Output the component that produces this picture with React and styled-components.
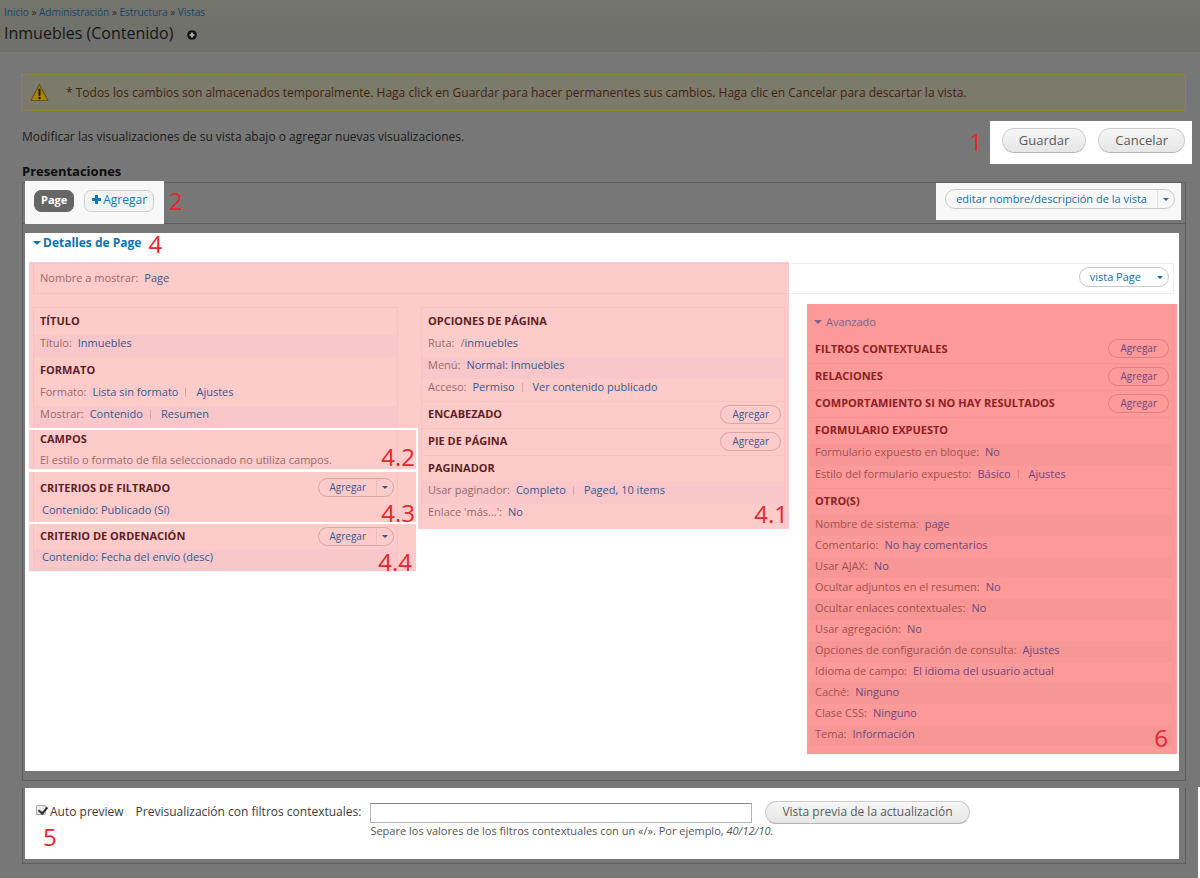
import React, { useState } from "react";
import styled, { createGlobalStyle, css } from "styled-components";

const GlobalStyle = createGlobalStyle`
  * {
    box-sizing: border-box;
  }

  body {
    margin: 0;
    background-color: #777777;
    color: #1c1c1c;
    font-family: "Open Sans", "Noto Sans", sans-serif;
    font-size: 12px;
    line-height: 16px;
  }

  a {
    text-decoration: none;
  }

  button, input {
    font-family: inherit;
  }
`;

// * Each marked area has its own set of colors.
const tones = {
  pink: { background: "#fecbcb", stripe: "#f9c7c9", line: "#f6c3c4", label: "#99696b", link: "#35588f", heading: "#5d1f22", pill: "#d9a5a8" },
  red: { background: "#fb9a98", stripe: "#f69795", line: "#f39492", label: "#a54f50", link: "#70477f", heading: "#8d2023", pill: "#de7f80" }
};

const Page = styled.div`
  position: relative;
  min-height: 100vh;
  padding-bottom: 14px;
`;

const EdgeStrip = styled.div`
  position: absolute;
  right: 0;
  bottom: 0;
  width: 2px;
  height: 91px;
  background-color: #ffffff;
`;

const Header = styled.header`
  height: 52px;
  padding: 5px 4px 0;
  background: linear-gradient(#73746c, #6f6f6c);
`;

const Breadcrumb = styled.nav`
  color: #2b2b2b;
  font-size: 10px;
  line-height: 14px;

  a {
    color: #12476a;
  }
`;

const PageTitle = styled.h1`
  display: flex;
  align-items: center;
  gap: 14px;
  margin: 3px 0 0;
  color: #161616;
  font-size: 16px;
  font-weight: 400;
  line-height: 22px;

  svg {
    margin-top: 4px;
  }
`;

const Warning = styled.div`
  display: flex;
  align-items: center;
  gap: 17px;
  height: 37px;
  margin: 22px 14px 0 21px;
  padding: 0 8px;
  border: 1px solid #8c8638;
  background-color: #7b7a6b;
  color: #451f10;
`;

const IntroRow = styled.div`
  display: flex;
  justify-content: space-between;
  margin: 10px 8px 0 22px;
`;

const IntroText = styled.p`
  margin: 8px 0 0;
`;

const Actions = styled.div`
  position: relative;
  display: flex;
  align-items: center;
  gap: 12px;
  height: 43px;
  padding: 0 7px 5px 12px;
  background-color: #ffffff;
`;

const RoundButton = styled.button`
  height: ${props => props.$height || 25}px;
  padding: 0 16px 1px;
  border: 1px solid #cccccc;
  border-bottom-color: #b4b4b4;
  border-radius: 13px;
  background: linear-gradient(#f6f6f6, #e6e6e6);
  color: #5a5a5a;
  font-size: ${props => props.$fontSize || 13}px;
  line-height: 18px;
`;

const SectionTitle = styled.h2`
  margin: -1px 22px 0;
  color: #0d0d0d;
  font-size: 13px;
  font-weight: 700;
  line-height: 16px;
`;

const Frame = styled.section`
  margin: ${props => props.$joined ? 0 : 3}px 14px 0 22px;
  border: 1px solid #5e5e5e;
  border-top-width: ${props => props.$joined ? 0 : 1}px;
`;

const FrameBar = styled.div`
  display: flex;
  align-items: flex-start;
  justify-content: space-between;
  height: 41px;
  padding: 0 4px 0 2px;
  border-bottom: 1px solid #5e5e5e;
`;

const Tabs = styled.div`
  position: relative;
  display: flex;
  gap: 10px;
  height: 43px;
  margin-top: -2px;
  padding: 9px 10px 0 9px;
  background-color: #f8f8f8;
`;

const Tab = styled.button`
  display: flex;
  align-items: center;
  gap: 1px;
  height: 22px;
  padding: 0 6px 3px;
  border: 1px solid ${props => props.$active ? "#666666" : "#cfcfcf"};
  border-radius: 7px;
  background-color: ${props => props.$active ? "#666666" : "#f3f3f3"};
  color: ${props => props.$active ? "#ffffff" : "#0f7ab8"};
  font-size: ${props => props.$active ? 11 : 12}px;
  font-weight: ${props => props.$active ? 700 : 400};
`;

const EditBox = styled.div`
  height: 37px;
  padding: 6px 6px 0 9px;
  background-color: #f8f8f8;
`;

const SplitButton = styled.div`
  display: flex;
  height: ${props => props.$height || 19}px;
  border: 1px solid ${props => props.$line || "#c9c9c9"};
  border-radius: 10px;
`;

const SplitPart = styled.button`
  display: flex;
  align-items: center;
  padding: 0 10px 1px;
  border: 0;
  background: none;
  color: ${props => props.$color || "#0f6fa8"};
  font-size: ${props => props.$fontSize || 11}px;
`;

const SplitToggle = styled.button`
  display: flex;
  align-items: center;
  width: 17px;
  padding: 0 5px;
  border: 0;
  border-left: 1px solid ${props => props.$line || "transparent"};
  background: none;
  color: ${props => props.$color || "#0f6fa8"};
`;

const Marker = styled.span`
  position: absolute;
  color: #e5262e;
  font-size: 24px;
  font-weight: 400;
  line-height: 24px;

  ${props => props.$place === "left" && css`
    right: calc(100% + 7px);
    top: 9px;
  `}
  ${props => props.$place === "right" && css`
    left: calc(100% + 5px);
    top: 8px;
  `}
  ${props => props.$place === "title" && css`
    left: calc(100% + 7px);
    top: -1px;
  `}
  ${props => props.$place === "corner" && css`
    right: ${props.$right || 1}px;
    bottom: ${props.$bottom || 0}px;
  `}
  ${props => props.$place === "inset" && css`
    right: 9px;
    bottom: 4px;
  `}
  ${props => props.$place === "below" && css`
    left: 18px;
    top: 37px;
  `}
`;

const Details = styled.div`
  margin: 9px 6px 9px 2px;
  padding: 0 2px 17px 4px;
  background-color: #ffffff;
`;

const DetailsTitle = styled.h3`
  position: relative;
  display: inline-flex;
  align-items: center;
  gap: 2px;
  height: 20px;
  margin: 0 0 9px 4px;
  color: #0a74b4;
  font-size: 12px;
  line-height: 20px;
  vertical-align: top;
`;

const DetailsGrid = styled.div`
  display: grid;
  grid-template-columns: 760fr 388fr;
  align-items: start;
`;

const Summary = styled.div`
  height: 43px;
  padding: 1px 0 11px 4px;
  background-color: ${tones.pink.background};
`;

const SummaryLine = styled.div`
  height: 31px;
  padding-top: 6px;
  border: solid ${tones.pink.line};
  border-width: 1px 0 1px 1px;
`;

const ViewBar = styled.div`
  display: flex;
  justify-content: flex-end;
  height: 31px;
  margin: 1px 3px 10px 0;
  padding: 3px 4px 0 0;
  border: solid #efefef;
  border-width: 1px 1px 1px 0;
`;

const Buckets = styled.div`
  display: grid;
  grid-template-columns: 389fr 371fr;
  align-items: start;
`;

const BucketBlock = styled.div`
  padding: 2px 20px 0 4px;
  background-color: ${tones.pink.background};
`;

const MarkedBlock = styled.div`
  position: relative;
  margin: ${props => props.$gap || 2}px 2px 0 0;
  padding: 0 18px 0 4px;
  background-color: ${tones.pink.background};
`;

const PageBlock = styled.div`
  position: relative;
  padding: 2px 4px 3px 3px;
  background-color: ${tones.pink.background};
`;

const Advanced = styled.div`
  position: relative;
  margin-left: 18px;
  padding: 5px 5px 8px 2px;
  background-color: ${tones.red.background};
`;

const AdvancedToggle = styled.button`
  display: flex;
  align-items: center;
  gap: 4px;
  height: 27px;
  padding: 0 5px 2px;
  border: 0;
  background: none;
  color: #84608f;
  font-size: 11px;
`;

const Box = styled.div`
  padding: ${props => props.$top || 0}px 0 ${props => props.$bottom || 0}px;
  border: solid ${tones.pink.line};
  border-width: ${props => props.$first ? "1px 1px 0" : "0 1px"};
`;

const GroupHead = styled.div`
  display: flex;
  align-items: center;
  justify-content: space-between;
  height: ${props => props.$marked ? 22 : 27}px;
  padding: 0 3px ${props => props.$marked ? 4 : 2}px 6px;
  border-top: ${props => props.$line ? `1px solid ${props.$tone.line}` : "0"};

  h4 {
    margin: 0;
    color: ${props => props.$tone.heading};
    font-size: 11px;
    font-weight: 700;
    line-height: 18px;
  }
`;

const AddButton = styled.button`
  height: 19px;
  padding: 0 11px 1px;
  border: 1px solid ${props => props.$tone.pill};
  border-radius: 10px;
  background: none;
  color: ${props => props.$tone.link};
  font-size: 10px;
  line-height: 16px;
`;

const rowSizes = {
  regular: css`
    height: 22px;
    padding-bottom: 6px;
  `,
  short: css`
    height: 21px;
    padding-bottom: 4px;
  `,
  tight: css`
    height: 17px;
    padding-bottom: 1px;
  `
};

const SettingRow = styled.div`
  display: flex;
  align-items: center;
  ${props => rowSizes[props.$size || "regular"]}
  padding-left: ${props => props.$indent ? 8 : 6}px;
  background-color: ${props => props.$striped ? props.$tone.stripe : "transparent"};
  color: ${props => props.$tone.label};
  font-size: 11px;
  line-height: 16px;
  white-space: nowrap;

  a {
    color: ${props => props.$tone.link};
  }
`;

const SettingLabel = styled.span`
  margin-right: 6px;
`;

const Separator = styled.span`
  width: 1px;
  height: 9px;
  margin: 0 10px 0 7px;
  background-color: ${props => props.$tone.pill};
`;

const Preview = styled.form`
  position: relative;
  display: flex;
  align-items: flex-start;
  height: 71px;
  margin: 7px 6px 4px 2px;
  padding: 13px 11px 0;
  background-color: #ffffff;
  color: #3b3b3b;
`;

const PreviewCheck = styled.label`
  display: flex;
  align-items: center;
  gap: 4px;
  height: 22px;
  margin-right: 12px;
`;

const Checkbox = styled.input`
  position: relative;
  width: 10px;
  height: 10px;
  margin: 0 0 4px;
  border: 1px solid #a9a9a9;
  border-radius: 1px;
  background-color: #ececec;
  appearance: none;

  &:checked::after {
    content: "";
    position: absolute;
    left: 3px;
    top: -1px;
    width: 4px;
    height: 7px;
    border: solid #2e2e2e;
    border-width: 0 2px 2px 0;
    transform: rotate(40deg);
  }
`;

const PreviewLabel = styled.label`
  height: 22px;
  margin-right: 9px;
  line-height: 22px;
`;

const PreviewField = styled.div`
  display: flex;
  flex: 0 1 382px;
  flex-direction: column;
  min-width: 0;
  padding-top: 2px;

  input {
    width: 100%;
    height: 20px;
    border: 1px solid #b5b5b5;
    border-top-color: #888888;
    background-color: #ffffff;
  }
`;

const PreviewHelp = styled.p`
  margin: 0;
  color: #555555;
  font-size: 11px;
  line-height: 16px;
  white-space: nowrap;
`;

const PreviewSubmit = styled.div`
  margin-left: 13px;
`;

const Caret = ({ size = 6 }) => (
  <svg width={size} height={size / 2} viewBox="0 0 8 4" fill="currentColor" aria-hidden="true">
    <path d="M0 0h8L4 4z" />
  </svg>
);

const Setting = ({ label, prefix, links, tone, striped, size }) => (
  <SettingRow $tone={tone} $striped={striped} $size={size} $indent={!label}>
    {label ? <SettingLabel>{label}</SettingLabel> : null}
    {prefix}
    {links.map((link, index) => (
      <React.Fragment key={link}>
        {index > 0 ? <Separator $tone={tone} /> : null}
        <a href="#">{link}</a>
      </React.Fragment>
    ))}
  </SettingRow>
);

const AddSplit = () => (
  <SplitButton $line={tones.pink.pill}>
    <SplitPart type="button" $fontSize={10} $color={tones.pink.link}>Agregar</SplitPart>
    <SplitToggle type="button" aria-label="Más opciones" $line="#edbcbe" $color={tones.pink.link}><Caret /></SplitToggle>
  </SplitButton>
);

const Add = ({ tone }) => <AddButton type="button" $tone={tone}>Agregar</AddButton>;

const Group = ({ title, tone, line, marked, action, children }) => (
  <>
    <GroupHead $tone={tone} $line={line} $marked={marked}>
      <h4>{title}</h4>
      {action}
    </GroupHead>
    {children}
  </>
);

const otherSettings = [
  { label: "Nombre de sistema:", links: ["page"] },
  { label: "Comentario:", links: ["No hay comentarios"] },
  { label: "Usar AJAX:", links: ["No"] },
  { label: "Ocultar adjuntos en el resumen:", links: ["No"] },
  { label: "Ocultar enlaces contextuales:", links: ["No"] },
  { label: "Usar agregación:", links: ["No"] },
  { label: "Opciones de configuración de consulta:", links: ["Ajustes"] },
  { label: "Idioma de campo:", links: ["El idioma del usuario actual"] },
  { label: "Caché:", links: ["Ninguno"] },
  { label: "Clase CSS:", links: ["Ninguno"] },
  { label: "Tema:", links: ["Información"] }
];

const App = () => {

  const [autoPreview, setAutoPreview] = useState(true);
  const [txtFilters, setTxtFilters] = useState("");

  const { pink, red } = tones;

  return (
    <Page>
      <GlobalStyle />

      <Header>
        <Breadcrumb>
          <a href="#">Inicio</a> » <a href="#">Administración</a> » <a href="#">Estructura</a> » <a href="#">Vistas</a>
        </Breadcrumb>
        <PageTitle>
          Inmuebles (Contenido)
          <svg width="10" height="10" viewBox="0 0 10 10" aria-hidden="true">
            <circle cx="5" cy="5" r="4.8" fill="#111111" />
            <path d="M5 2.600v4.800M2.600 5h4.800" stroke="#a4a4a0" strokeWidth="2.200" />
          </svg>
        </PageTitle>
      </Header>

      <Warning>
        <svg width="19" height="19" viewBox="0 0 19 19" aria-hidden="true">
          <path d="M9.500 1.500L18 17.500H1z" fill="#a88312" stroke="#6b5310" strokeWidth="1.200" strokeLinejoin="round" />
          <path d="M9.500 6.500v5.500" stroke="#1c1606" strokeWidth="2" strokeLinecap="round" />
          <circle cx="9.500" cy="15" r="1.200" fill="#1c1606" />
        </svg>
        <span>* Todos los cambios son almacenados temporalmente. Haga click en Guardar para hacer permanentes sus cambios. Haga clic en Cancelar para descartar la vista.</span>
      </Warning>

      <IntroRow>
        <IntroText>Modificar las visualizaciones de su vista abajo o agregar nuevas visualizaciones.</IntroText>
        <Actions>
          <Marker $place="left">1</Marker>
          <RoundButton type="button">Guardar</RoundButton>
          <RoundButton type="button">Cancelar</RoundButton>
        </Actions>
      </IntroRow>

      <SectionTitle>Presentaciones</SectionTitle>

      <Frame>
        <FrameBar>
          <Tabs>
            <Tab type="button" $active>Page</Tab>
            <Tab type="button">
              <svg width="11" height="11" viewBox="0 0 11 11" aria-hidden="true">
                <path d="M5.500 1v9M1 5.500h9" stroke="#0f7ab8" strokeWidth="3" />
              </svg>
              Agregar
            </Tab>
            <Marker $place="right">2</Marker>
          </Tabs>
          <EditBox>
            <SplitButton $height={20}>
              <SplitPart type="button">editar nombre/descripción de la vista</SplitPart>
              <SplitToggle type="button" aria-label="Más opciones" $line="#dddddd"><Caret /></SplitToggle>
            </SplitButton>
          </EditBox>
        </FrameBar>

        <Details>
          <DetailsTitle>
            <Caret size={8} />
            Detalles de Page
            <Marker $place="title">4</Marker>
          </DetailsTitle>

          <DetailsGrid>
            <div>
              <Summary>
                <SummaryLine>
                  <Setting tone={pink} label="Nombre a mostrar:" links={["Page"]} />
                </SummaryLine>
              </Summary>

              <Buckets>
                <div>
                  <BucketBlock>
                    <Box $first>
                      <Group title="TÍTULO" tone={pink}>
                        <Setting tone={pink} striped label="Título:" links={["Inmuebles"]} />
                      </Group>
                      <Group title="FORMATO" tone={pink}>
                        <Setting tone={pink} label="Formato:" links={["Lista sin formato", "Ajustes"]} />
                        <Setting tone={pink} striped label="Mostrar:" links={["Contenido", "Resumen"]} />
                      </Group>
                    </Box>
                  </BucketBlock>

                  <MarkedBlock>
                    <Box>
                      <Group title="CAMPOS" tone={pink} marked>
                        <SettingRow $tone={pink} $size="tight">El estilo o formato de fila seleccionado no utiliza campos.</SettingRow>
                      </Group>
                    </Box>
                    <Marker $place="corner">4.2</Marker>
                  </MarkedBlock>

                  <MarkedBlock $gap={3}>
                    <Box $top={3} $bottom={3}>
                      <Group title="CRITERIOS DE FILTRADO" tone={pink} action={<AddSplit />}>
                        <Setting tone={pink} size="tight" links={["Contenido: Publicado (Sí)"]} />
                      </Group>
                    </Box>
                    <Marker $place="corner" $bottom={-3}>4.3</Marker>
                  </MarkedBlock>

                  <MarkedBlock>
                    <Box $top={3}>
                      <Group title="CRITERIO DE ORDENACIÓN" tone={pink} marked action={<AddSplit />}>
                        <Setting tone={pink} striped links={["Contenido: Fecha del envío (desc)"]} />
                      </Group>
                    </Box>
                    <Marker $place="corner" $right={4} $bottom={-3}>4.4</Marker>
                  </MarkedBlock>
                </div>

                <PageBlock>
                  <Box $first>
                    <Group title="OPCIONES DE PÁGINA" tone={pink}>
                      <Setting tone={pink} label="Ruta:" prefix="/" links={["inmuebles"]} />
                      <Setting tone={pink} striped label="Menú:" links={["Normal: Inmuebles"]} />
                      <Setting tone={pink} label="Acceso:" links={["Permiso", "Ver contenido publicado"]} />
                    </Group>
                    <Group title="ENCABEZADO" tone={pink} line action={<Add tone={pink} />} />
                    <Group title="PIE DE PÁGINA" tone={pink} line action={<Add tone={pink} />} />
                    <Group title="PAGINADOR" tone={pink} line>
                      <Setting tone={pink} striped label="Usar paginador:" links={["Completo", "Paged, 10 items"]} />
                      <Setting tone={pink} label="Enlace 'más...':" links={["No"]} />
                    </Group>
                  </Box>
                  <Marker $place="corner" $bottom={3}>4.1</Marker>
                </PageBlock>
              </Buckets>
            </div>

            <div>
              <ViewBar>
                <SplitButton $height={20}>
                  <SplitPart type="button">vista Page</SplitPart>
                  <SplitToggle type="button" aria-label="Más opciones"><Caret /></SplitToggle>
                </SplitButton>
              </ViewBar>

              <Advanced>
                <AdvancedToggle type="button"><Caret size={8} />Avanzado</AdvancedToggle>
                <Group title="FILTROS CONTEXTUALES" tone={red} action={<Add tone={red} />} />
                <Group title="RELACIONES" tone={red} line action={<Add tone={red} />} />
                <Group title="COMPORTAMIENTO SI NO HAY RESULTADOS" tone={red} line action={<Add tone={red} />} />
                <Group title="FORMULARIO EXPUESTO" tone={red} line>
                  <Setting tone={red} striped label="Formulario expuesto en bloque:" links={["No"]} />
                  <Setting tone={red} label="Estilo del formulario expuesto:" links={["Básico", "Ajustes"]} />
                </Group>
                <Group title="OTRO(S)" tone={red} line>
                  {otherSettings.map((setting, index) => (
                    <Setting key={setting.label} tone={red} size="short" striped={index % 2 === 0} label={setting.label} links={setting.links} />
                  ))}
                </Group>
                <Marker $place="inset">6</Marker>
              </Advanced>
            </div>
          </DetailsGrid>
        </Details>
      </Frame>

      <Frame $joined>
        <Preview onSubmit={(event) => { event.preventDefault(); }}>
          <PreviewCheck>
            <Checkbox type="checkbox" checked={autoPreview} onChange={() => { setAutoPreview(!autoPreview); }} />
            Auto preview
          </PreviewCheck>
          <PreviewLabel htmlFor="txtFilters">Previsualización con filtros contextuales:</PreviewLabel>
          <PreviewField>
            <input id="txtFilters" type="text" value={txtFilters} onChange={(event) => { setTxtFilters(event.target.value); }} />
            <PreviewHelp>Separe los valores de los filtros contextuales con un «/». Por ejemplo, <em>40/12/10.</em></PreviewHelp>
          </PreviewField>
          <PreviewSubmit>
            <RoundButton type="submit" $height={23} $fontSize={12}>Vista previa de la actualización</RoundButton>
          </PreviewSubmit>
          <Marker $place="below">5</Marker>
        </Preview>
      </Frame>

      <EdgeStrip />
    </Page>
  );
};

export default App;
